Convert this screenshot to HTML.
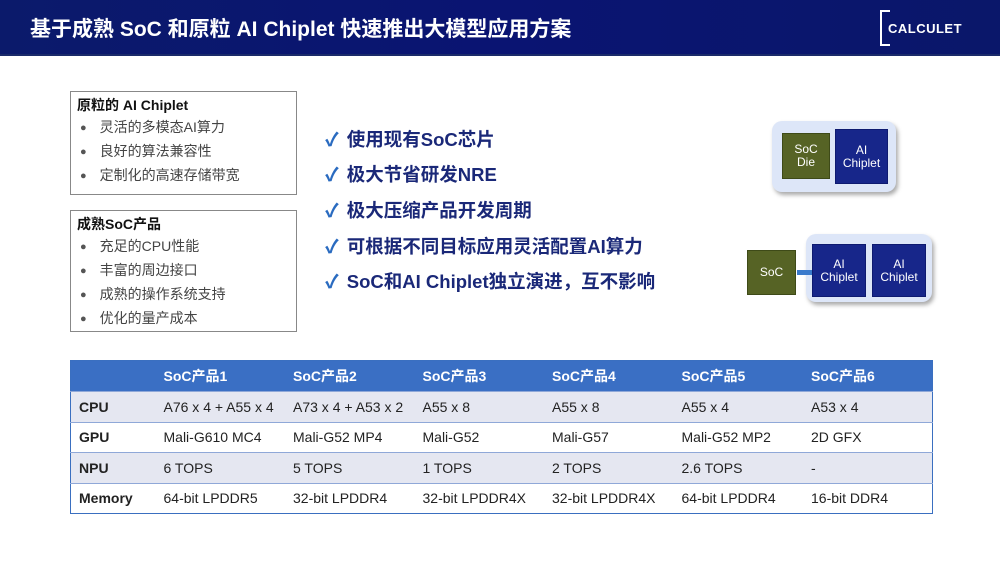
<!DOCTYPE html>
<html><head><meta charset="utf-8"><style>
*{margin:0;padding:0;box-sizing:border-box}
body{width:1000px;height:563px;background:#fff;position:relative;overflow:hidden;font-family:"Liberation Sans","Noto Sans CJK SC",sans-serif}
.hdr{position:absolute;left:0;top:0;width:1000px;height:56px;background:linear-gradient(90deg,#0b1a6b 0%,#0a1472 50%,#0a176a 100%);border-bottom:2px solid #1a2a6a}
.hdr h1{position:absolute;left:30px;top:13px;color:#fff;font-size:21px;font-weight:bold;letter-spacing:0}
.logo{position:absolute;left:880px;top:10px;width:90px;height:36px;color:#fff;font-size:13px;font-weight:bold;}
.logo .br{position:absolute;left:0;top:0;width:10px;height:36px;border:2px solid #fff;border-right:none}
.logo span{position:absolute;left:8px;top:11px;letter-spacing:0.5px}
.box{position:absolute;border:1px solid #888;background:#fff}
.box .t{font-weight:bold;font-size:14px;color:#111;padding:3px 0 0 6px}
.box ul{list-style:none;font-size:14px;color:#444}
.box li{height:24px;line-height:24px;padding-left:9px}
.box li:before{content:"●";font-size:11px;color:#555;margin-right:13px;vertical-align:1px}
.chk{position:absolute;left:325px;font-size:18.5px;font-weight:bold;color:#1a2878}
.chk b{color:#2a6bc0;margin-right:8px}
table{position:absolute;left:70px;top:360px;width:862px;border-collapse:collapse;border:1px solid #3a6fc0;font-size:14px;color:#222;table-layout:fixed}
td{height:30.5px;padding-left:8px;white-space:nowrap}
tr.h td{background:#3a6fc4;color:#fff;font-weight:bold;height:31px}
tr.a td{background:#e5e7f1}
tr td:first-child{font-weight:bold}
tr:not(.h) td{border-top:1px solid #8fa8d8}
.rb{position:absolute;background:#dde6f8;border-radius:10px;box-shadow:2px 3px 4px #aaa}
.sq{position:absolute;color:#fff;font-size:12px;text-align:center;display:flex;align-items:center;justify-content:center;line-height:13px}
.g{background:#566325;border:1px solid #3e4a18}
.n{background:#17268a;border:1px solid #0e1a70}
</style></head><body>
<div class="hdr"><h1>基于成熟 SoC 和原粒 AI Chiplet 快速推出大模型应用方案</h1>
<div class="logo"><div class="br"></div><span>CALCULET</span></div></div>

<div class="box" style="left:70px;top:91px;width:227px;height:104px"><div class="t">原粒的 AI Chiplet</div>
<ul><li>灵活的多模态AI算力</li><li>良好的算法兼容性</li><li>定制化的高速存储带宽</li></ul></div>
<div class="box" style="left:70px;top:210px;width:227px;height:122px"><div class="t">成熟SoC产品</div>
<ul><li>充足的CPU性能</li><li>丰富的周边接口</li><li>成熟的操作系统支持</li><li>优化的量产成本</li></ul></div>

<div class="chk" style="top:126px"><b>✓</b>使用现有SoC芯片</div>
<div class="chk" style="top:161px"><b>✓</b>极大节省研发NRE</div>
<div class="chk" style="top:197px"><b>✓</b>极大压缩产品开发周期</div>
<div class="chk" style="top:233px"><b>✓</b>可根据不同目标应用灵活配置AI算力</div>
<div class="chk" style="top:268px"><b>✓</b>SoC和AI Chiplet独立演进，互不影响</div>

<div class="rb" style="left:772px;top:121px;width:124px;height:71px"></div>
<div class="sq g" style="left:782px;top:133px;width:48px;height:46px">SoC<br>Die</div>
<div class="sq n" style="left:835px;top:129px;width:53px;height:55px">AI<br>Chiplet</div>

<div class="rb" style="left:806px;top:234px;width:126px;height:68px"></div>
<div class="sq g" style="left:747px;top:250px;width:49px;height:45px">SoC</div>
<div style="position:absolute;left:797px;top:270px;width:15px;height:5px;background:#3a7acc"></div>
<div class="sq n" style="left:812px;top:244px;width:54px;height:53px">AI<br>Chiplet</div>
<div class="sq n" style="left:872px;top:244px;width:54px;height:53px">AI<br>Chiplet</div>

<table>
<colgroup><col style="width:85px"><col style="width:129.5px"><col style="width:129.5px"><col style="width:129.5px"><col style="width:129.5px"><col style="width:129.5px"><col style="width:129.5px"></colgroup>
<tr class="h"><td></td><td>SoC产品1</td><td>SoC产品2</td><td>SoC产品3</td><td>SoC产品4</td><td>SoC产品5</td><td>SoC产品6</td></tr>
<tr class="a"><td>CPU</td><td>A76 x 4 + A55 x 4</td><td>A73 x 4 + A53 x 2</td><td>A55 x 8</td><td>A55 x 8</td><td>A55 x 4</td><td>A53 x 4</td></tr>
<tr><td>GPU</td><td>Mali-G610 MC4</td><td>Mali-G52 MP4</td><td>Mali-G52</td><td>Mali-G57</td><td>Mali-G52 MP2</td><td>2D GFX</td></tr>
<tr class="a"><td>NPU</td><td>6 TOPS</td><td>5 TOPS</td><td>1 TOPS</td><td>2 TOPS</td><td>2.6 TOPS</td><td>-</td></tr>
<tr><td>Memory</td><td>64-bit LPDDR5</td><td>32-bit LPDDR4</td><td>32-bit LPDDR4X</td><td>32-bit LPDDR4X</td><td>64-bit LPDDR4</td><td>16-bit DDR4</td></tr>
</table>
</body></html>
